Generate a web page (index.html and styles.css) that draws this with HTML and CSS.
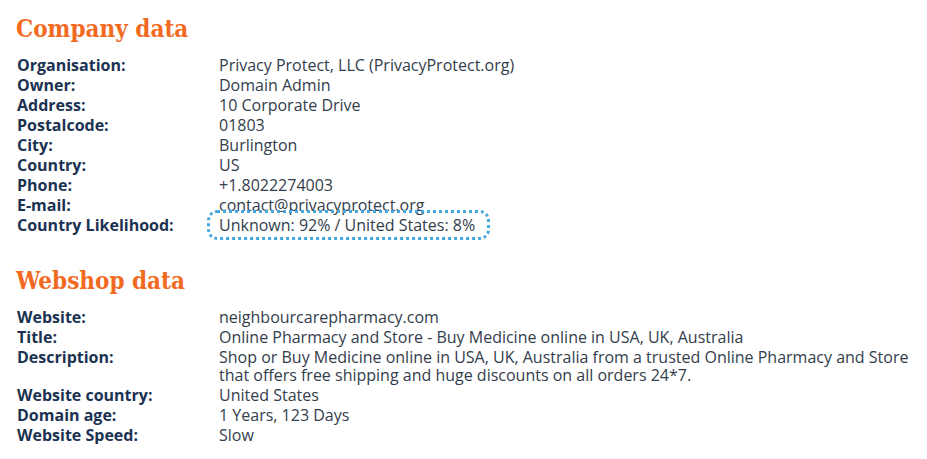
FILE: index.html
```html
<!DOCTYPE html>
<html lang="en">
<head>
  <meta charset="UTF-8">
  <title>Company and webshop data</title>
  <link rel="stylesheet" href="styles.css">
</head>
<body>

  <section class="block">
    <h2>Company data</h2>
    <dl class="info">
      <dt>Organisation:</dt><dd>Privacy Protect, LLC (PrivacyProtect.org)</dd>
      <dt>Owner:</dt><dd>Domain Admin</dd>
      <dt>Address:</dt><dd>10 Corporate Drive</dd>
      <dt>Postalcode:</dt><dd>01803</dd>
      <dt>City:</dt><dd>Burlington</dd>
      <dt>Country:</dt><dd>US</dd>
      <dt>Phone:</dt><dd>+1.8022274003</dd>
      <dt>E-mail:</dt><dd>contact@privacyprotect.org</dd>
      <dt>Country Likelihood:</dt><dd><span class="likely">Unknown: 92% / United States: 8%</span></dd>
    </dl>
  </section>

  <section class="block">
    <h2>Webshop data</h2>
    <dl class="info">
      <dt>Website:</dt><dd>neighbourcarepharmacy.com</dd>
      <dt>Title:</dt><dd>Online Pharmacy and Store - Buy Medicine online in USA, UK, Australia</dd>
      <dt>Description:</dt><dd>Shop or Buy Medicine online in USA, UK, Australia from a trusted Online Pharmacy and Store that offers free shipping and huge discounts on all orders 24*7.</dd>
      <dt>Website country:</dt><dd>United States</dd>
      <dt>Domain age:</dt><dd>1 Years, 123 Days</dd>
      <dt>Website Speed:</dt><dd>Slow</dd>
    </dl>
  </section>

</body>
</html>
```

FILE: styles.css
```css
body {
  margin: 0;
  padding: 12px 8px 0 17px;
  background: #fff;
  font-family: "Open Sans", sans-serif;
  font-size: 16px;
  color: #333d4c;
}
.block h2 {
  margin: 0 0 10px -1px;
  font-family: "DejaVu Serif", serif;
  font-size: 24px;
  font-stretch: condensed;
  font-weight: bold;
  color: #f26a1f;
  line-height: 34px;
}
.block + .block {
  margin-top: 30px;
}
.info {
  display: grid;
  grid-template-columns: 202px 1fr;
  row-gap: 2px;
  margin: 0;
  line-height: 18px;
}
.info dt {
  font-weight: bold;
  color: #1b3252;
}
.info dd {
  margin: 0;
}
.likely {
  display: inline-block;
  margin: -6px 0 -6px -12px;
  padding: 3px 12px 3px 9px;
  border: 3px dotted #45a8dc;
  border-radius: 10px;
}
```
